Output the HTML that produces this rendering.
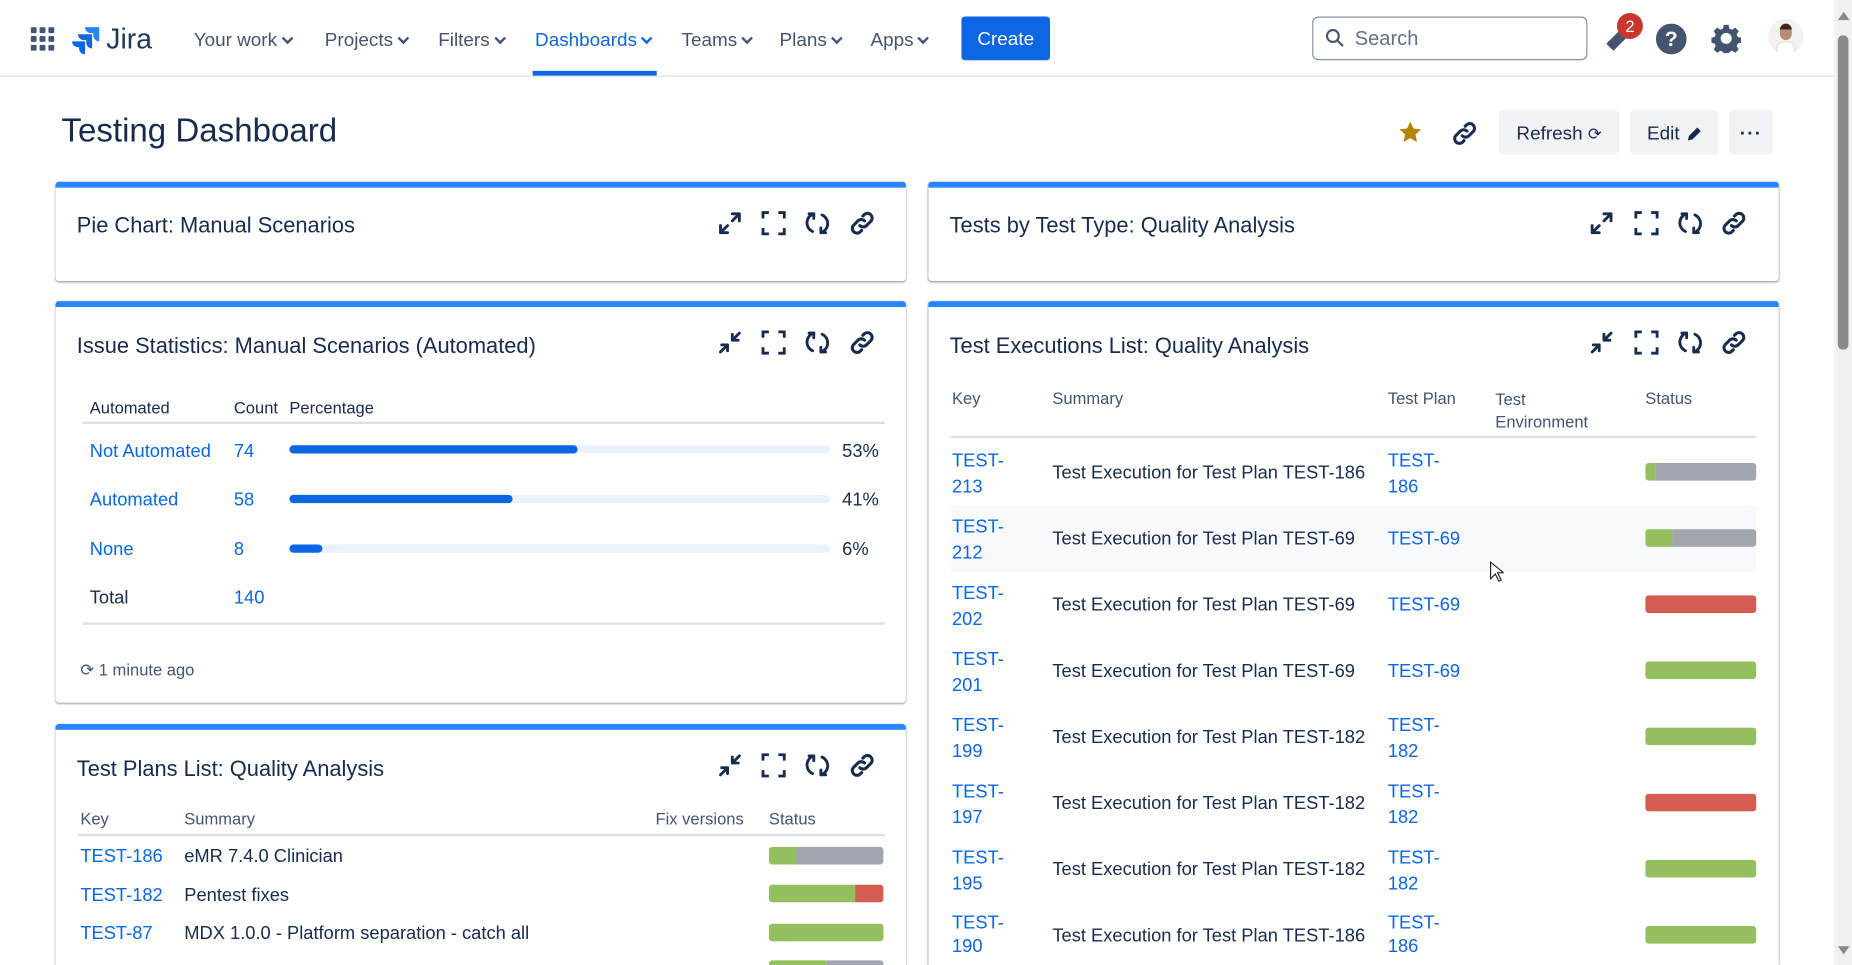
<!DOCTYPE html>
<html><head><meta charset="utf-8">
<style>
*{box-sizing:border-box;margin:0;padding:0}
html,body{width:1852px;height:965px;overflow:hidden;background:#fff}
#s{position:absolute;left:0;top:0;width:1568px;height:817px;transform:scale(1.18112);transform-origin:0 0;font-family:"Liberation Sans",sans-serif;color:#172b4d;overflow:hidden}
.a{position:absolute;white-space:nowrap}
.nav{font-size:16px;color:#44546f;top:26px}
.nav.sel{color:#0c66e4}
.chev{display:inline-block;width:7px;height:7px;border-right:2px solid currentColor;border-bottom:2px solid currentColor;transform:rotate(45deg);margin-left:5px;position:relative;top:-3px}
.panel{position:absolute;background:#fff;border-top:5px solid #2684ff;border-radius:3px;box-shadow:0 1px 2px rgba(9,30,66,.35),0 0 1px rgba(9,30,66,.3)}
.cut{clip-path:inset(-6px -6px 0 -6px);border-bottom-left-radius:0;border-bottom-right-radius:0}
.pt{position:absolute;left:18px;font-size:18.5px;color:#172b4d}
.ic{position:absolute}
.lnk{color:#0c66e4}
.th{font-size:14px;color:#44546f}
.td{font-size:15.5px}
.bar{position:absolute;height:15px;border-radius:3px;overflow:hidden;display:flex;width:94px}
.g{background:#94bf5f}.gr{background:#a1a5ad}.r{background:#d45d52}
.btn{position:absolute;background:#f1f2f4;border-radius:4px;top:93px;height:38px;font-size:16px;color:#172b4d;display:flex;align-items:center;justify-content:center;padding-top:3px}
</style></head><body><div id="s">
<div class="a" style="left:0;top:64px;width:1553px;border-top:1px solid #dcdfe4"></div>
<svg class="a" style="left:26px;top:23px" width="20" height="20" viewBox="0 0 20 20" fill="#44546f"><rect x="0" y="0" width="5" height="5" rx="1"/><rect x="7.5" y="0" width="5" height="5" rx="1"/><rect x="15" y="0" width="5" height="5" rx="1"/><rect x="0" y="7.5" width="5" height="5" rx="1"/><rect x="7.5" y="7.5" width="5" height="5" rx="1"/><rect x="15" y="7.5" width="5" height="5" rx="1"/><rect x="0" y="15" width="5" height="5" rx="1"/><rect x="7.5" y="15" width="5" height="5" rx="1"/><rect x="15" y="15" width="5" height="5" rx="1"/></svg>
<svg class="a" style="left:61px;top:22px" width="24" height="24" viewBox="0 0 24 24"><path d="M23 1H11a5 5 0 0 0 5 5h2v2a5 5 0 0 0 5 5z" fill="#2684ff"/><path d="M17 7H5a5 5 0 0 0 5 5h2v2a5 5 0 0 0 5 5z" fill="#1868db"/><path d="M11 13H0a5 5 0 0 0 5 5h1v2a5 5 0 0 0 5 4z" fill="#0c66e4"/></svg>
<div class="a" style="left:90px;top:20px;font-size:24px;color:#253858">Jira</div>
<div class="a nav" style="left:164px">Your work<span class="chev"></span></div>
<div class="a nav" style="left:275px">Projects<span class="chev"></span></div>
<div class="a nav" style="left:371px">Filters<span class="chev"></span></div>
<div class="a nav sel" style="left:453px">Dashboards<span class="chev"></span></div>
<div class="a" style="left:451px;top:60px;width:105px;height:4px;background:#0c66e4"></div>
<div class="a nav" style="left:577px">Teams<span class="chev"></span></div>
<div class="a nav" style="left:660px">Plans<span class="chev"></span></div>
<div class="a nav" style="left:737px">Apps<span class="chev"></span></div>
<div class="a" style="left:814px;top:14px;width:75px;height:37px;background:#0c66e4;border-radius:3px;color:#fff;font-size:16px;display:flex;align-items:center;justify-content:center;padding-top:3px">Create</div>
<div class="a" style="left:1111px;top:14px;width:233px;height:37px;border:1px solid #8590a2;border-radius:5px"></div>
<svg class="a" style="left:1122px;top:24px" width="16" height="16" viewBox="0 0 16 16" fill="none" stroke="#44546f" stroke-width="1.8"><circle cx="6.5" cy="6.5" r="5"/><path d="M10.5 10.5L15 15"/></svg>
<div class="a" style="left:1147px;top:23px;font-size:17px;color:#626f86">Search</div>
<svg class="a" style="left:1357px;top:20px" width="26" height="26" viewBox="0 0 26 26"><path d="M4 16L15 5l6 6-11 11z" fill="#44546f"/><path d="M3 17l2-2 6 6-2 2z" fill="#44546f"/></svg>
<div class="a" style="left:1369px;top:11px;width:22px;height:22px;border-radius:50%;background:#c9372c;color:#fff;font-size:14px;text-align:center;line-height:22px">2</div>
<svg class="a" style="left:1402px;top:20px" width="26" height="26" viewBox="0 0 26 26"><circle cx="13" cy="13" r="13" fill="#44546f"/><text x="13" y="19" text-anchor="middle" fill="#fff" font-size="18" font-weight="bold" font-family="Liberation Sans">?</text></svg>
<svg class="a" style="left:1449px;top:20px" width="25" height="25" viewBox="0 0 24 24"><path fill="#44546f" d="M10 1h4l.6 3 2.2 1 2.6-1.7 2.8 2.8-1.7 2.6 1 2.2 3 .6v4l-3 .6-1 2.2 1.7 2.6-2.8 2.8-2.6-1.7-2.2 1-.6 3h-4l-.6-3-2.2-1-2.6 1.7-2.8-2.8 1.7-2.6-1-2.2-3-.6v-4l3-.6 1-2.2-1.7-2.6 2.8-2.8 2.6 1.7 2.2-1zM12 7.5a4.5 4.5 0 1 0 0 9 4.5 4.5 0 0 0 0-9z"/></svg>
<div class="a" style="left:1497px;top:16px;width:30px;height:30px;border-radius:50%;background:#f4f1ef;overflow:hidden"><div style="position:absolute;left:10px;top:5px;width:10px;height:13px;border-radius:5px;background:#b98b74"></div><div style="position:absolute;left:10px;top:4px;width:10px;height:5px;border-radius:5px 5px 0 0;background:#3a2a22"></div><div style="position:absolute;left:7px;top:19px;width:16px;height:12px;border-radius:6px 6px 0 0;background:#fff;border:1px solid #ddd"></div></div>
<div class="a" style="left:1553px;top:0;width:15px;height:817px;background:#f1f1f1;z-index:5"></div>
<div class="a" style="left:1556px;top:30px;width:9px;height:266px;background:#8a8a8a;border-radius:4px;z-index:6"></div>
<div class="a" style="left:1556px;top:10px;border:5px solid transparent;border-bottom:7px solid #8a8a8a;border-top:0;z-index:6"></div>
<div class="a" style="left:1556px;top:801px;border:5px solid transparent;border-top:7px solid #8a8a8a;border-bottom:0;z-index:6"></div>
<div class="a" style="left:52px;top:95px;font-size:28px;color:#172b4d">Testing Dashboard</div>
<svg class="a" style="left:1183px;top:101px" width="22" height="22" viewBox="0 0 24 24"><path fill="#b38600" d="M12 2l3 6.5 7 .8-5.2 4.8 1.5 7-6.3-3.7-6.3 3.7 1.5-7L2 9.3l7-.8z"/></svg>
<svg class="a" style="left:1228px;top:101px" width="24" height="24" viewBox="0 0 24 24" fill="none" stroke="#172b4d" stroke-width="2.6" stroke-linecap="round"><path d="M10 14a4 4 0 0 0 5.6 0l4-4a4 4 0 0 0-5.6-5.6l-1.5 1.5"/><path d="M14 10a4 4 0 0 0-5.6 0l-4 4a4 4 0 0 0 5.6 5.6l1.5-1.5"/></svg>
<div class="btn" style="left:1269px;width:102px">Refresh&nbsp;<span style="font-size:14px">⟳</span></div>
<div class="btn" style="left:1380px;width:75px">Edit&nbsp;<svg width="14" height="14" viewBox="0 0 14 14"><path d="M2 12l1-4 7-7 3 3-7 7z" fill="#172b4d"/></svg></div>
<div class="btn" style="left:1464px;width:37px;font-weight:bold;letter-spacing:1px">···</div>

<div class="panel" style="left:47px;top:154px;width:720px;height:84px"><div class="pt" style="top:21px">Pie Chart: Manual Scenarios</div></div>
<div class="panel" style="left:786px;top:154px;width:720px;height:84px"><div class="pt" style="top:21px">Tests by Test Type: Quality Analysis</div></div>
<div class="panel" style="left:47px;top:255px;width:720px;height:340px"><div class="pt" style="top:22px">Issue Statistics: Manual Scenarios (Automated)</div></div>
<div class="panel cut" style="left:47px;top:613px;width:720px;height:204px"><div class="pt" style="top:22px">Test Plans List: Quality Analysis</div></div>
<div class="panel cut" style="left:786px;top:255px;width:720px;height:562px"><div class="pt" style="top:22px">Test Executions List: Quality Analysis</div></div>

<svg width="0" height="0" style="position:absolute"><defs>
<g id="ex" fill="none" stroke="#172b4d" stroke-width="2.4" stroke-linecap="round"><path d="M3 19L9 13M3 19v-6M3 19h6M19 3l-6 6M19 3v6M19 3h-6"/></g>
<g id="co" fill="none" stroke="#172b4d" stroke-width="2.4" stroke-linecap="round"><path d="M3 19l6-6M9 13v5M9 13H4M19 3l-6 6M13 9V4M13 9h5"/></g>
<g id="fs" fill="none" stroke="#172b4d" stroke-width="2.4"><path d="M2 7V2h5M15 2h5v5M20 15v5h-5M7 20H2v-5"/></g>
<g id="rf" fill="none" stroke="#172b4d" stroke-width="2.4" stroke-linecap="round"><path d="M8 3a8 8 0 0 0-1 15"/><path d="M8 3H4M8 3v4"/><path d="M14 19a8 8 0 0 0 1-15"/><path d="M14 19h4M14 19v-4"/></g>
<g id="lk" fill="none" stroke="#172b4d" stroke-width="2.6" stroke-linecap="round"><path d="M9 13a4 4 0 0 0 5.6 0l4-4a4 4 0 0 0-5.6-5.6l-1.5 1.5"/><path d="M13 9a4 4 0 0 0-5.6 0l-4 4a4 4 0 0 0 5.6 5.6l1.5-1.5"/></g>
</defs></svg>
<svg class="ic" style="left:607px;top:178px" width="22" height="22"><use href="#ex"/></svg>
<svg class="ic" style="left:644px;top:178px" width="22" height="22"><use href="#fs"/></svg>
<svg class="ic" style="left:681px;top:178px" width="22" height="22"><use href="#rf"/></svg>
<svg class="ic" style="left:719px;top:178px" width="22" height="22"><use href="#lk"/></svg>
<svg class="ic" style="left:1345px;top:178px" width="22" height="22"><use href="#ex"/></svg>
<svg class="ic" style="left:1383px;top:178px" width="22" height="22"><use href="#fs"/></svg>
<svg class="ic" style="left:1420px;top:178px" width="22" height="22"><use href="#rf"/></svg>
<svg class="ic" style="left:1457px;top:178px" width="22" height="22"><use href="#lk"/></svg>
<svg class="ic" style="left:607px;top:279px" width="22" height="22"><use href="#co"/></svg>
<svg class="ic" style="left:644px;top:279px" width="22" height="22"><use href="#fs"/></svg>
<svg class="ic" style="left:681px;top:279px" width="22" height="22"><use href="#rf"/></svg>
<svg class="ic" style="left:719px;top:279px" width="22" height="22"><use href="#lk"/></svg>
<svg class="ic" style="left:1345px;top:279px" width="22" height="22"><use href="#co"/></svg>
<svg class="ic" style="left:1383px;top:279px" width="22" height="22"><use href="#fs"/></svg>
<svg class="ic" style="left:1420px;top:279px" width="22" height="22"><use href="#rf"/></svg>
<svg class="ic" style="left:1457px;top:279px" width="22" height="22"><use href="#lk"/></svg>
<svg class="ic" style="left:607px;top:637px" width="22" height="22"><use href="#co"/></svg>
<svg class="ic" style="left:644px;top:637px" width="22" height="22"><use href="#fs"/></svg>
<svg class="ic" style="left:681px;top:637px" width="22" height="22"><use href="#rf"/></svg>
<svg class="ic" style="left:719px;top:637px" width="22" height="22"><use href="#lk"/></svg>

<div class="a th" style="left:76px;top:337px;color:#172b4d">Automated</div>
<div class="a th" style="left:198px;top:337px;color:#172b4d">Count</div>
<div class="a th" style="left:245px;top:337px;color:#172b4d">Percentage</div>
<div class="a" style="left:70px;top:357px;width:679px;border-top:2px solid #dcdfe4"></div>
<div class="a td lnk" style="left:76px;top:374px">Not Automated</div><div class="a td lnk" style="left:198px;top:374px">74</div>
<div class="a" style="left:245px;top:377px;width:458px;height:7px;border-radius:4px;background:#e9f2fe"></div><div class="a" style="left:245px;top:377px;width:244px;height:7px;border-radius:4px;background:#0c66e4"></div><div class="a td" style="left:713px;top:374px">53%</div>
<div class="a td lnk" style="left:76px;top:415px">Automated</div><div class="a td lnk" style="left:198px;top:415px">58</div>
<div class="a" style="left:245px;top:419px;width:458px;height:7px;border-radius:4px;background:#e9f2fe"></div><div class="a" style="left:245px;top:419px;width:189px;height:7px;border-radius:4px;background:#0c66e4"></div><div class="a td" style="left:713px;top:415px">41%</div>
<div class="a td lnk" style="left:76px;top:457px">None</div><div class="a td lnk" style="left:198px;top:457px">8</div>
<div class="a" style="left:245px;top:461px;width:458px;height:7px;border-radius:4px;background:#e9f2fe"></div><div class="a" style="left:245px;top:461px;width:28px;height:7px;border-radius:4px;background:#0c66e4"></div><div class="a td" style="left:713px;top:457px">6%</div>
<div class="a td" style="left:76px;top:498px">Total</div><div class="a td lnk" style="left:198px;top:498px">140</div>
<div class="a" style="left:70px;top:527px;width:679px;border-top:2px solid #dcdfe4"></div>
<div class="a" style="left:68px;top:559px;font-size:14px;color:#44546f">⟳ 1 minute ago</div>

<div class="a th" style="left:68px;top:685px">Key</div>
<div class="a th" style="left:156px;top:685px">Summary</div>
<div class="a th" style="left:555px;top:685px">Fix versions</div>
<div class="a th" style="left:651px;top:685px">Status</div>
<div class="a" style="left:66px;top:706px;width:683px;border-top:2px solid #dcdfe4"></div>
<div class="a td lnk" style="left:68px;top:717px">TEST-186</div><div class="a td" style="left:156px;top:717px">eMR 7.4.0 Clinician</div>
<div class="bar" style="left:651px;top:717px;width:97px"><div class="g" style="width:24%"></div><div class="gr" style="flex:1"></div></div>
<div class="a td lnk" style="left:68px;top:750px">TEST-182</div><div class="a td" style="left:156px;top:750px">Pentest fixes</div>
<div class="bar" style="left:651px;top:749px;width:97px"><div class="g" style="width:75%"></div><div class="r" style="flex:1"></div></div>
<div class="a td lnk" style="left:68px;top:782px">TEST-87</div><div class="a td" style="left:156px;top:782px">MDX 1.0.0 - Platform separation - catch all</div>
<div class="bar" style="left:651px;top:782px;width:97px"><div class="g" style="flex:1"></div></div>
<div class="a" style="left:651px;top:813px;width:97px;height:4px;display:flex;overflow:hidden;border-radius:3px 3px 0 0"><div class="g" style="width:50%"></div><div class="gr" style="flex:1"></div></div>

<div class="a th" style="left:806px;top:329px">Key</div>
<div class="a th" style="left:891px;top:329px">Summary</div>
<div class="a th" style="left:1175px;top:329px">Test Plan</div>
<div class="a th" style="left:1266px;top:329px;line-height:19px">Test<br>Environment</div>
<div class="a th" style="left:1393px;top:329px">Status</div>
<div class="a" style="left:805px;top:369px;width:682px;border-top:2px solid #dcdfe4"></div>
<div class="a" style="left:805px;top:428px;width:682px;height:56px;background:#f8f9fb"></div>
<div class="a td lnk" style="left:806px;top:380px;line-height:22px">TEST-<br>213</div><div class="a td" style="left:891px;top:392px">Test Execution for Test Plan TEST-186</div><div class="a td lnk" style="left:1175px;top:380px;line-height:22px">TEST-<br>186</div><div class="bar" style="left:1393px;top:392px"><div class="g" style="width:10%"></div><div class="gr" style="flex:1"></div></div>
<div class="a td lnk" style="left:806px;top:436px;line-height:22px">TEST-<br>212</div><div class="a td" style="left:891px;top:448px">Test Execution for Test Plan TEST-69</div><div class="a td lnk" style="left:1175px;top:448px">TEST-69</div><div class="bar" style="left:1393px;top:448px"><div class="g" style="width:24%"></div><div class="gr" style="flex:1"></div></div>
<div class="a td lnk" style="left:806px;top:492px;line-height:22px">TEST-<br>202</div><div class="a td" style="left:891px;top:504px">Test Execution for Test Plan TEST-69</div><div class="a td lnk" style="left:1175px;top:504px">TEST-69</div><div class="bar" style="left:1393px;top:504px"><div class="r" style="flex:1"></div></div>
<div class="a td lnk" style="left:806px;top:548px;line-height:22px">TEST-<br>201</div><div class="a td" style="left:891px;top:560px">Test Execution for Test Plan TEST-69</div><div class="a td lnk" style="left:1175px;top:560px">TEST-69</div><div class="bar" style="left:1393px;top:560px"><div class="g" style="flex:1"></div></div>
<div class="a td lnk" style="left:806px;top:604px;line-height:22px">TEST-<br>199</div><div class="a td" style="left:891px;top:616px">Test Execution for Test Plan TEST-182</div><div class="a td lnk" style="left:1175px;top:604px;line-height:22px">TEST-<br>182</div><div class="bar" style="left:1393px;top:616px"><div class="g" style="flex:1"></div></div>
<div class="a td lnk" style="left:806px;top:660px;line-height:22px">TEST-<br>197</div><div class="a td" style="left:891px;top:672px">Test Execution for Test Plan TEST-182</div><div class="a td lnk" style="left:1175px;top:660px;line-height:22px">TEST-<br>182</div><div class="bar" style="left:1393px;top:672px"><div class="r" style="flex:1"></div></div>
<div class="a td lnk" style="left:806px;top:716px;line-height:22px">TEST-<br>195</div><div class="a td" style="left:891px;top:728px">Test Execution for Test Plan TEST-182</div><div class="a td lnk" style="left:1175px;top:716px;line-height:22px">TEST-<br>182</div><div class="bar" style="left:1393px;top:728px"><div class="g" style="flex:1"></div></div>
<div class="a td lnk" style="left:806px;top:772px;line-height:20px">TEST-<br>190</div><div class="a td" style="left:891px;top:784px">Test Execution for Test Plan TEST-186</div><div class="a td lnk" style="left:1175px;top:772px;line-height:20px">TEST-<br>186</div><div class="bar" style="left:1393px;top:784px"><div class="g" style="flex:1"></div></div>
<svg class="a" style="left:1261px;top:475px" width="12" height="18" viewBox="0 0 12 18"><path d="M1 1v14l4-4 3 6 2-1-3-6h5z" fill="#fff" stroke="#222" stroke-width="1"/></svg>
</div></body></html>
